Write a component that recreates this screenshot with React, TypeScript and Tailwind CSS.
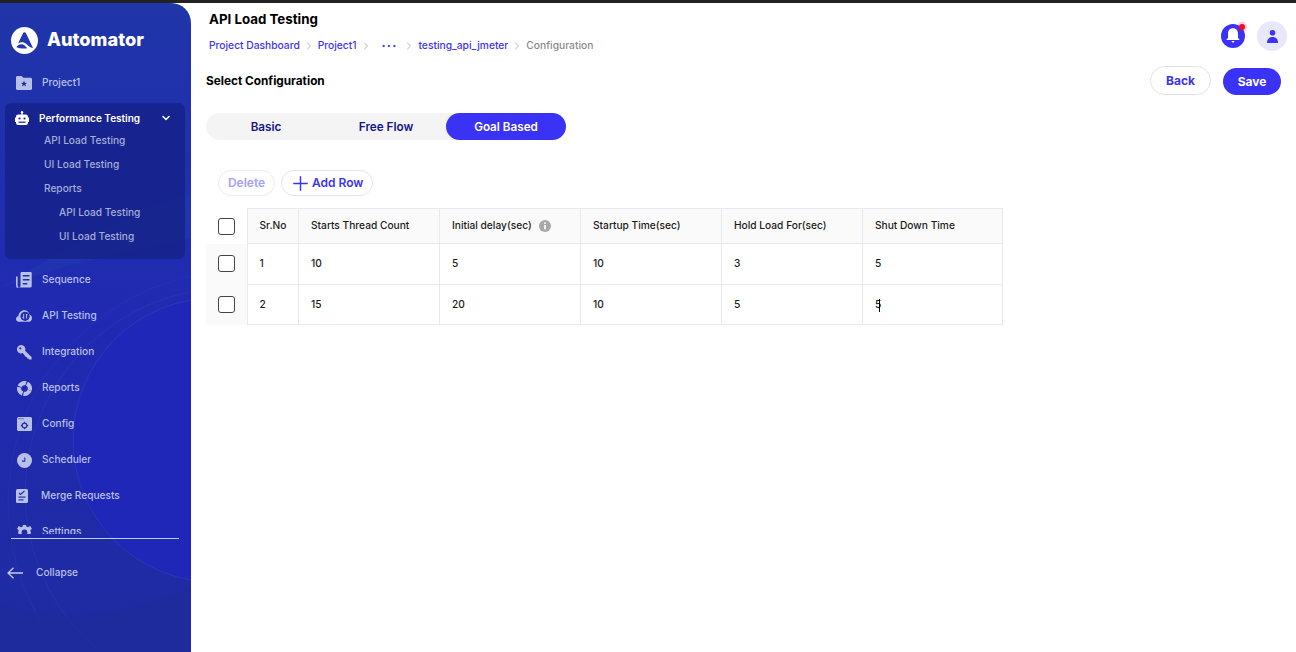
import { ChevronDown, ChevronRight, Plus } from 'lucide-react';
import type { ReactNode } from 'react';

const inter = 'font-["Inter",_"Liberation_Sans",_sans-serif]';

function FolderIcon() {
  return (
    <svg width="16" height="14" viewBox="0 0 16 14" fill="none">
      <path d="M1.500 0h4.200l1.600 1.700h7.200c.8 0 1.500.7 1.500 1.500v9.300c0 .8-.7 1.500-1.500 1.500h-13C.7 14 0 13.300 0 12.500v-11C0 .7.700 0 1.500 0z" fill="#b9c0e8" />
      <path d="M8 4.800l.9 1.900 2 .2-1.500 1.300.4 2L8 9.200l-1.800 1 .4-2L5.100 6.900l2-.2z" fill="#1f2fa5" />
    </svg>
  );
}

function RobotIcon() {
  return (
    <svg width="14" height="14" viewBox="0 0 14 14" fill="none">
      <circle cx="7" cy="1.200" r="1.200" fill="#fff" />
      <rect x="6.400" y="1.500" width="1.200" height="2.500" fill="#fff" />
      <rect x="1" y="3.500" width="12" height="10.500" rx="2.200" fill="#fff" />
      <rect x="0" y="6.500" width="1" height="4.500" fill="#fff" />
      <rect x="13" y="6.500" width="1" height="4.500" fill="#fff" />
      <circle cx="4.500" cy="7.500" r="1.100" fill="#16238c" />
      <circle cx="9.500" cy="7.500" r="1.100" fill="#16238c" />
      <rect x="3.500" y="10.600" width="7" height="1.200" fill="#16238c" />
    </svg>
  );
}

function SequenceIcon() {
  return (
    <svg width="16" height="16" viewBox="0 0 16 16" fill="none">
      <path d="M.8 4.500v9c0 1 .6 1.700 1.500 1.700" stroke="#b9c0e8" strokeWidth="1.600" />
      <path d="M4.500 1.200c0-.7.500-1.200 1.200-1.200h8.800c.7 0 1.200.5 1.200 1.200v13.100c0 .7-.5 1.200-1.200 1.200H3.200c.8-.4 1.300-1 1.300-1.700z" fill="#b9c0e8" />
      <rect x="6.800" y="3" width="6.700" height="1.500" fill="#1f2fa8" />
      <rect x="6.800" y="7" width="6.700" height="1.500" fill="#1f2fa8" />
      <rect x="6.800" y="11" width="4.500" height="1.500" fill="#1f2fa8" />
    </svg>
  );
}

function CloudIcon() {
  return (
    <svg width="18" height="14" viewBox="0 0 18 14" fill="none">
      <path d="M4 13.500C1.800 13.500 0 12.200 0 10.300c0-1.600 1.100-2.700 2.600-3C3 3.400 5.800.5 9.500.5c3 0 5 2 5.500 4.900 1.800.5 3 2 3 4 0 2.400-1.800 4.100-4 4.100z" fill="#b9c0e8" />
      <circle cx="10.200" cy="7.300" r="5.200" fill="#2330ae" />
      <path d="M8.600 4.800v5M8.600 9.800L7.300 8.500M11.800 9.800v-5M11.800 4.800l1.300 1.300" stroke="#d5daf5" strokeWidth="0.900" />
    </svg>
  );
}

function KeyIcon() {
  return (
    <svg width="15" height="15" viewBox="0 0 15 15" fill="none">
      <path d="M4.200 0a4.200 4.200 0 0 1 3.900 5.700l6.500 6.400v2.500h-2.500l-.9-1.100-1-.1-.1-1.200-1.300-.2L5.700 8.100A4.200 4.200 0 1 1 4.200 0z" fill="#b9c0e8" />
      <circle cx="3.300" cy="3.300" r="1.100" fill="#2330ae" />
    </svg>
  );
}

function ReportsIcon() {
  return (
    <svg width="15" height="15" viewBox="0 0 15 15" fill="none">
      <circle cx="7.500" cy="7.500" r="5.400" stroke="#b9c0e8" strokeWidth="4.200" strokeDasharray="7.400 1.080" transform="rotate(20 7.500 7.500)" />
    </svg>
  );
}

function ConfigIcon() {
  return (
    <svg width="15" height="14" viewBox="0 0 15 14" fill="none">
      <rect width="15" height="14" rx="1.600" fill="#b9c0e8" />
      <rect x="1.500" y="1.200" width="1" height="1" fill="#2330ae" />
      <rect x="3.500" y="1.200" width="1" height="1" fill="#2330ae" />
      <rect x="5.500" y="1.200" width="1" height="1" fill="#2330ae" />
      <circle cx="7.500" cy="8.500" r="2.400" stroke="#2330ae" strokeWidth="1.300" />
      <path d="M7.500 4.800v1.300M7.500 10.900v1.300M3.800 8.500h1.300M9.900 8.500h1.300" stroke="#2330ae" strokeWidth="1" />
    </svg>
  );
}

function ClockIcon() {
  return (
    <svg width="15" height="15" viewBox="0 0 15 15" fill="none">
      <circle cx="7.500" cy="7.500" r="7.500" fill="#b9c0e8" />
      <path d="M7.800 4.500v3.600H5" stroke="#2330ae" strokeWidth="1.100" />
    </svg>
  );
}

function MergeIcon() {
  return (
    <svg width="12" height="14" viewBox="0 0 12 14" fill="none">
      <rect width="12" height="14" rx="1.600" fill="#b9c0e8" />
      <path d="M3 4l1.500 1.500L8.500 2" stroke="#2330ae" strokeWidth="1.200" />
      <rect x="2.500" y="7.500" width="7" height="1.200" fill="#2330ae" />
      <rect x="2.500" y="10.300" width="5" height="1.200" fill="#2330ae" />
    </svg>
  );
}

function SettingsIcon() {
  return (
    <svg width="15" height="15" viewBox="0 0 15 15" fill="none">
      <circle cx="7.500" cy="7.500" r="4.600" stroke="#b9c0e8" strokeWidth="3.400" />
      <path d="M5.800 0h3.400v3H5.800zM5.800 12h3.400v3H5.800zM0 4l1.700-3 2.700 1.600-1.700 3zM15 4l-1.700-3-2.700 1.600 1.700 3zM0 11l1.700 3 2.700-1.600-1.700-3zM15 11l-1.700 3-2.700-1.600 1.700-3z" fill="#b9c0e8" />
    </svg>
  );
}

function LogoMark() {
  return (
    <svg width="27" height="27" viewBox="0 0 27 27" fill="none">
      <circle cx="13.500" cy="13.500" r="13.500" fill="#fff" />
      <path d="M12 6.200c.7-1.300 2.300-1.300 3 0l7 14.800c-3-.3-4.800-2.500-6.800-4.300-2.200-1.900-5.600-2.200-8.200-.2z" fill="#2438b4" />
      <path d="M5.400 20.200c1.300-2.400 4.300-3.700 6.700-2.700 1.800.7 2.800 2.600 4.400 3.700-3.700.6-7.700.4-11.100-1z" fill="#2438b4" />
    </svg>
  );
}

function NavRow({ icon, label, gap = 'gap-[10px]', align = 'justify-center' }: { icon: ReactNode; label: string; gap?: string; align?: string }) {
  return (
    <div className={`flex items-center h-9 shrink-0 pl-4 ${gap}`}>
      <span className={`flex items-center w-4 h-4 shrink-0 ${align}`}>{icon}</span>
      <span className="text-[10.150px] font-medium text-[#b9c0e8]">{label}</span>
    </div>
  );
}

function Crumb({ children }: { children: ReactNode }) {
  return <span className="text-[#3a33f5]">{children}</span>;
}

function Sep() {
  return <ChevronRight size={12} className="text-[#9a9a9a] mx-[3px]" strokeWidth={1.500} />;
}

function Sidebar() {
  return (
    <aside className="relative w-[191px] shrink-0 h-full rounded-tr-[20px] overflow-hidden flex flex-col bg-gradient-to-b from-[#2035a8] via-[#2029b2] to-[#1f2ba0]">
      {/* background swirl */}
      <svg className="absolute inset-0 pointer-events-none" width="191" height="649" fill="none">
        <circle cx="215" cy="437" r="142" fill="#1f27b8" stroke="#3a4bc2" strokeOpacity="0.400" />
        <circle cx="230" cy="490" r="205" stroke="#3a4bc2" strokeOpacity="0.250" />
        <circle cx="240" cy="500" r="232" stroke="#3a4bc2" strokeOpacity="0.180" />
        <path d="M0 285C60 262 130 248 191 235V190C120 210 60 250 0 285z" fill="#2540b4" fillOpacity="0.350" />
        <path d="M0 649L0 600C60 625 130 610 191 585V649z" fill="#1c2c98" fillOpacity="0.500" />
      </svg>

      <div className="relative flex flex-col h-full">
        <div className="flex items-center gap-[9px] h-[62px] shrink-0 pl-[11px] pt-[12px]">
          <LogoMark />
          <span className="text-[18.200px] font-extrabold text-white">Automator</span>
        </div>

        <div className="h-[469px] overflow-hidden shrink-0">
          <NavRow icon={<FolderIcon />} label="Project1" />

          <div className="ml-[5px] mr-[6px] mb-[3px] mt-[2px] h-[156px] rounded-md bg-[#16238c]/90 pt-[4px]">
            <div className="flex items-center h-[22px] pl-[10px] pr-[13px]">
              <RobotIcon />
              <span className="ml-[10px] text-[10px] font-semibold text-white">Performance Testing</span>
              <ChevronDown size={12} strokeWidth={3} className="ml-auto text-white" />
            </div>
            <div className="flex flex-col text-[10.150px] font-medium text-[#a5add8]">
              <span className="h-6 leading-6 pl-[39px] -mt-[1px]">API Load Testing</span>
              <span className="h-6 leading-6 pl-[39px]">UI Load Testing</span>
              <span className="h-6 leading-6 pl-[39px]">Reports</span>
              <span className="h-6 leading-6 pl-[54px]">API Load Testing</span>
              <span className="h-6 leading-6 pl-[54px]">UI Load Testing</span>
            </div>
          </div>

          <NavRow icon={<SequenceIcon />} label="Sequence" />
          <NavRow icon={<CloudIcon />} label="API Testing" />
          <NavRow icon={<KeyIcon />} label="Integration" />
          <NavRow icon={<ReportsIcon />} label="Reports" />
          <NavRow icon={<ConfigIcon />} label="Config" />
          <NavRow icon={<ClockIcon />} label="Scheduler" />
          <NavRow icon={<MergeIcon />} label="Merge Requests" gap="gap-[9px]" align="justify-start" />
          <NavRow icon={<SettingsIcon />} label="Settings" />
        </div>

        <div className="ml-[11px] mt-[4px] h-px w-[168px] bg-[#c5cbee] shrink-0" />

        <div className="flex items-center gap-[13px] pl-[7px] mt-[26px]">
          <svg width="16" height="12" viewBox="0 0 16 12" fill="none">
            <path d="M16 6H1M6.500 .7L1 6l5.500 5.300" stroke="#c5cbee" strokeWidth="1.300" />
          </svg>
          <span className="text-[10.150px] font-medium text-[#b9c0e8]">Collapse</span>
        </div>
      </div>
    </aside>
  );
}

const headers = ['Starts Thread Count', 'Initial delay(sec)', 'Startup Time(sec)', 'Hold Load For(sec)', 'Shut Down Time'];

const rows = [
  ['1', '10', '5', '10', '3', '5'],
  ['2', '15', '20', '10', '5', '5'],
];

function Checkbox({ className = '' }: { className?: string }) {
  return <span className={`block w-[17px] h-[17px] rounded-[3px] border border-[#444] bg-white ml-[12px] ${className}`} />;
}

function ConfigTable() {
  return (
    <table className="table-fixed border-collapse w-[796px] text-[10.200px] text-[#1a1a1a]">
      <colgroup>
        <col className="w-[41px]" />
        <col className="w-[51px]" />
        <col className="w-[141px]" />
        <col className="w-[141px]" />
        <col className="w-[141px]" />
        <col className="w-[141px]" />
        <col className="w-[140px]" />
      </colgroup>
      <thead>
        <tr className="h-[35px]">
          <th className="p-0 bg-white">
            <Checkbox />
          </th>
          <th className="border border-[#e8e8ee] bg-[#fafafa] pl-3 text-left font-medium">Sr.No</th>
          {headers.map((h, i) => (
            <th key={h} className="border border-[#e8e8ee] bg-[#fafafa] pl-[12.500px] text-left font-medium">
              <span className="inline-flex items-center gap-[7px]">
                {h}
                {i === 1 && (
                  <svg width="12" height="12" viewBox="0 0 12 12" fill="none">
                    <circle cx="6" cy="6" r="6" fill="#a8a8a8" />
                    <rect x="5.200" y="2.400" width="1.600" height="1.600" fill="#fff" />
                    <rect x="5.200" y="5" width="1.600" height="4.400" fill="#fff" />
                  </svg>
                )}
              </span>
            </th>
          ))}
        </tr>
      </thead>
      <tbody>
        {rows.map((row, r) => (
          <tr key={row[0]} className={r === 0 ? 'h-[41px]' : 'h-[40px]'}>
            <td className="p-0 bg-[#fafafa]">
              <Checkbox className={r === 0 ? '-mt-[1px]' : ''} />
            </td>
            {row.map((cell, c) => (
              <td key={c} className={`border border-[#e8e8ee] font-medium ${c === 0 ? 'pl-3' : 'pl-[12.500px]'}`}>
                {cell}
                {r === 1 && c === 5 && <span className="inline-block w-px h-[13px] bg-black align-middle -ml-[2px]" />}
              </td>
            ))}
          </tr>
        ))}
      </tbody>
    </table>
  );
}

function Content() {
  return (
    <main className="flex-1 min-w-0 flex flex-col bg-white">
      <div className="flex items-start justify-between h-[63px] pl-[18px] pr-[9px] shrink-0">
        <div>
          <h1 className="text-[13.300px] font-bold text-black mt-[8px] leading-4">API Load Testing</h1>
          <div className="flex items-center text-[10.250px] font-medium mt-[11px] h-4">
            <Crumb>Project Dashboard</Crumb>
            <Sep />
            <Crumb>Project1</Crumb>
            <Sep />
            <span className="text-[#3a33f5] text-[11px] font-black tracking-[1.200px] ml-[7px] mr-[3px] leading-none">···</span>
            <Sep />
            <Crumb>testing_api_jmeter</Crumb>
            <Sep />
            <span className="text-[#8a8a8a]">Configuration</span>
          </div>
        </div>
        <div className="flex items-center gap-3 mt-[18px]">
          <span className="relative flex items-center justify-center w-6 h-6 rounded-full bg-[#3a33f5]">
            <svg width="18" height="18" viewBox="0 0 16 16" fill="none">
              <path d="M8 1.200c2.800 0 4.400 2 4.400 4.600v3.700l1.600 2H2l1.600-2V5.800c0-2.600 1.600-4.600 4.400-4.600z" fill="#fff" />
              <path d="M6.500 12.500h3L8 14.300z" fill="#fff" />
            </svg>
            <span className="absolute top-0 right-0 w-[6px] h-[6px] rounded-full bg-[#e8102c] ring-2 ring-[#e8102c]/20" />
          </span>
          <span className="flex items-center justify-center w-[30px] h-[30px] rounded-full bg-[#e8e8fb]">
            <svg width="11" height="13" viewBox="0 0 11 13" fill="none">
              <circle cx="5.500" cy="2.800" r="2.800" fill="#3a33f5" />
              <path d="M0 13c0-4 2-6 5.500-6s5.500 2 5.500 6z" fill="#3a33f5" />
            </svg>
          </span>
        </div>
      </div>

      <div className="flex items-center justify-between pl-[15px] pr-[15px] h-[29px] shrink-0">
        <h2 className="text-[11.800px] font-bold text-black pt-[2px]">Select Configuration</h2>
        <div className="flex items-center gap-3">
          <button className="w-[61px] h-[29px] rounded-full border border-[#e2e2e2] bg-white text-[12px] font-bold text-[#3a33f5]">Back</button>
          <button className="w-[58px] h-[27px] mt-[2px] rounded-full bg-[#3a33f5] text-[12px] font-bold text-white">Save</button>
        </div>
      </div>

      <div className="flex w-[360px] h-[27px] ml-[15px] mt-[18px] rounded-full bg-[#f4f4f4] text-[11.700px] font-semibold shrink-0">
        <span className="flex-1 flex items-center justify-center pt-[2px] text-[#14148c]">Basic</span>
        <span className="flex-1 flex items-center justify-center pt-[2px] text-[#14148c]">Free Flow</span>
        <span className="flex-1 flex items-center justify-center pt-[2px] rounded-full bg-[#3a33f5] text-white">Goal Based</span>
      </div>

      <div className="flex items-center gap-[6px] ml-[27px] mt-[30px] shrink-0">
        <button className="w-[57px] h-[26px] rounded-full border border-[#ececf2] text-[12px] font-semibold text-[#a5a2fa]">Delete</button>
        <button className="flex items-center pl-[7px] w-[92px] h-[26px] rounded-full border border-[#e4e4ec] text-[12px] font-semibold text-[#3a33f5]">
          <Plus size={23} strokeWidth={1.500} />
          Add Row
        </button>
      </div>

      <div className="ml-[15px] mt-3">
        <ConfigTable />
      </div>
    </main>
  );
}

export default function App() {
  return (
    <div className={`w-[1296px] h-[652px] flex flex-col overflow-hidden bg-white ${inter}`}>
      <div className="h-[3px] bg-[#222] shrink-0" />
      <div className="flex flex-1 min-h-0">
        <Sidebar />
        <Content />
      </div>
    </div>
  );
}
